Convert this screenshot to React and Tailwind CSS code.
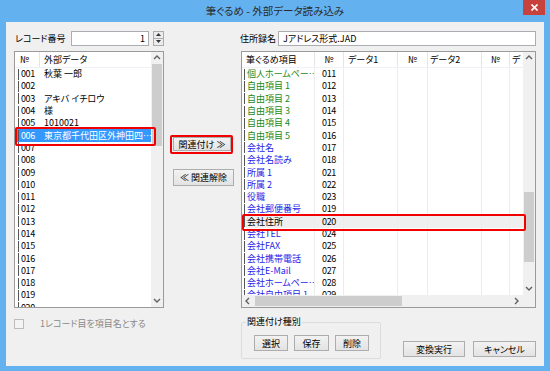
import React from 'react';

const leftRows = [
  ['001', '秋葉 一郎'],
  ['002', ''],
  ['003', 'アキバ イチロウ'],
  ['004', '様'],
  ['005', '1010021'],
  ['006', '東京都千代田区外神田四…', true],
  ['007', ''],
  ['008', ''],
  ['009', ''],
  ['010', ''],
  ['011', ''],
  ['012', ''],
  ['013', ''],
  ['014', ''],
  ['015', ''],
  ['016', ''],
  ['017', ''],
  ['018', ''],
  ['019', ''],
  ['020', ''],
];

const G = 'text-[#1a8a1a]';
const B = 'text-[#1e1ee8]';

const rightRows = [
  ['個人ホームペー…', '011', G],
  ['自由項目 1', '012', G],
  ['自由項目 2', '013', G],
  ['自由項目 3', '014', G],
  ['自由項目 4', '015', G],
  ['自由項目 5', '016', G],
  ['会社名', '017', B],
  ['会社名読み', '018', B],
  ['所属 1', '021', B],
  ['所属 2', '022', B],
  ['役職', '023', B],
  ['会社郵便番号', '019', B],
  ['会社住所', '020', 'text-black', true],
  ['会社TEL', '024', B],
  ['会社FAX', '025', B],
  ['会社携帯電話', '026', B],
  ['会社E-Mail', '027', B],
  ['会社ホームペー…', '028', B],
  ['会社自由項目 1', '029', B],
];

const Chevron = ({ dir }) => {
  const d = {
    up: 'M1 5 L4 2 L7 5',
    down: 'M1 2 L4 5 L7 2',
    left: 'M5 1 L2 4 L5 7',
    right: 'M2 1 L5 4 L2 7',
  }[dir];
  return (
    <svg width="8" height="8" viewBox="0 0 8 8">
      <path d={d} fill="none" stroke="#606060" strokeWidth="1.4" />
    </svg>
  );
};

const Btn = ({ children, className = '' }) => (
  <div
    className={`flex items-center justify-center border border-[#adadad] bg-gradient-to-b from-[#f2f2f2] to-[#e3e3e3] text-black leading-none whitespace-nowrap ${className}`}
  >
    {children}
  </div>
);

export default function App() {
  return (
    <div className="w-[550px] h-[371px] bg-[#64b1f0] flex flex-col font-['Noto_Sans_CJK_JP',sans-serif] [font-feature-settings:'palt'] text-[9px] text-black select-none">
      {/* title bar */}
      <div className="h-[22px] grid grid-cols-[1fr_auto_1fr] items-start">
        <div />
        <div className="pt-[6px] text-[10.5px] leading-none text-[#2a2a2a] whitespace-nowrap">筆ぐるめ - 外部データ読み込み</div>
        <div className="justify-self-end mr-[5px] w-[22px] h-[15px] bg-[#c7413d] flex items-center justify-center">
          <svg width="7" height="7" viewBox="0 0 7 7">
            <path d="M0.5 0.5 L6.5 6.5 M6.5 0.5 L0.5 6.5" stroke="#fff" strokeWidth="1.6" />
          </svg>
        </div>
      </div>

      {/* client area */}
      <div className="mx-[6px] mb-[5px] flex-1 bg-[#f0f0f0] px-[8px] flex flex-col">
        {/* top row */}
        <div className="mt-[9px] h-[14px] flex items-center whitespace-nowrap">
          <div className="w-[57px] leading-none pl-[1px]">レコード番号</div>
          <div className="w-[78px] h-[15px] border border-[#abadb3] bg-white flex items-center justify-end pr-[3px] leading-none">1</div>
          <div className="ml-[4px] w-[11px] h-[15px] border border-[#adadad] flex flex-col bg-[#ececec]">
            <div className="flex-1 flex items-center justify-center border-b border-[#adadad]">
              <svg width="5" height="3" viewBox="0 0 5 3"><path d="M0 3 L2.5 0 L5 3Z" fill="#333" /></svg>
            </div>
            <div className="flex-1 flex items-center justify-center">
              <svg width="5" height="3" viewBox="0 0 5 3"><path d="M0 0 L2.5 3 L5 0Z" fill="#333" /></svg>
            </div>
          </div>
          <div className="ml-[76px] w-[38px] leading-none">住所録名</div>
          <div className="flex-1 h-[15px] border border-[#abadb3] bg-white flex items-center pl-[4px] leading-none">Jアドレス形式.JAD</div>
        </div>

        {/* main row */}
        <div className="mt-[6px] h-[257px] flex">
          {/* left list */}
          <div className="relative w-[150px] border border-[#9a9a9a] bg-white flex">
            <div className="flex-1 flex flex-col overflow-hidden">
              <div className="h-[16px] flex items-center border-b border-[#eef2f7] shrink-0">
                <div className="w-[25px] h-full flex items-center pl-[5px] border-r border-[#e5e5e5]">№</div>
                <div className="pl-[4px]">外部データ</div>
              </div>
              {leftRows.map(([no, text, sel]) => (
                <div key={no} className={`h-[12.3px] shrink-0 flex items-center leading-[12px] whitespace-nowrap ${sel ? 'bg-[#3399ff] text-white' : ''}`}>
                  <div className="ml-[3px] w-px h-[11px] bg-[#555] shrink-0" />
                  <div className="w-[25px] shrink-0 pl-[2px] tracking-[-0.4px]">{no}</div>
                  <div>{text}</div>
                </div>
              ))}
            </div>
            <div className="w-[12px] bg-[#f0f0f0] flex flex-col items-center">
              <div className="h-[12px] flex items-center justify-center"><Chevron dir="up" /></div>
              <div className="w-[10px] h-[82px] bg-[#cdcdcd]" />
              <div className="flex-1" />
              <div className="h-[12px] flex items-center justify-center"><Chevron dir="down" /></div>
            </div>
            <div className="absolute left-0 top-[75px] w-[141px] h-[19px] border-[2.5px] border-[#f20000] rounded-[2px]" />
          </div>

          {/* middle buttons */}
          <div className="w-[77px] flex flex-col items-start pl-[8px]">
            <div className="relative mt-[86px]">
              <Btn className="w-[58px] h-[14px] mx-[1px]">関連付け ≫</Btn>
              <div className="absolute -left-[2px] -top-[2.5px] w-[63px] h-[19px] border-[2.5px] border-[#f20000] rounded-[2px]" />
            </div>
            <Btn className="mt-[18px] ml-[1px] w-[61px] h-[17px]">≪ 関連解除</Btn>
          </div>

          {/* right list */}
          <div className="relative flex-1 border border-[#9a9a9a] bg-white flex flex-col">
            <div className="flex-1 flex min-h-0">
              <div className="flex-1 flex flex-col overflow-hidden">
                <div className="h-[16px] flex shrink-0 border-b border-[#eef2f7] whitespace-nowrap">
                  <div className="w-[73px] shrink-0 flex items-center pl-[4px] border-r border-[#e5e5e5]">筆ぐるめ項目</div>
                  <div className="w-[29px] shrink-0 flex items-center justify-center border-r border-[#e5e5e5]">№</div>
                  <div className="w-[54px] shrink-0 flex items-center pl-[4px] border-r border-[#e5e5e5]">データ1</div>
                  <div className="w-[30px] shrink-0 flex items-center justify-center border-r border-[#e5e5e5]">№</div>
                  <div className="w-[54px] shrink-0 flex items-center pl-[2px] border-r border-[#e5e5e5]">データ2</div>
                  <div className="w-[28px] shrink-0 flex items-center justify-center border-r border-[#e5e5e5]">№</div>
                  <div className="w-[13px] shrink-0 flex items-center pl-[2px] overflow-hidden">デ</div>
                </div>
                {rightRows.map(([name, no, color, sel]) => (
                  <div key={no} className={`h-[12.3px] shrink-0 flex leading-[12px] whitespace-nowrap ${sel ? 'bg-[#efefef]' : ''}`}>
                    <div className={`w-[73px] shrink-0 overflow-hidden flex items-center border-r border-[#ececec] ${color}`}>
                      <div className="ml-[2px] mr-[2px] w-px h-[11px] bg-[#555] shrink-0" />
                      {name}
                    </div>
                    <div className="w-[29px] shrink-0 flex items-center justify-center border-r border-[#ececec] tracking-[-0.4px]">{no}</div>
                    <div className="w-[54px] shrink-0 border-r border-[#ececec]" />
                    <div className="w-[30px] shrink-0 border-r border-[#ececec]" />
                    <div className="w-[54px] shrink-0 border-r border-[#ececec]" />
                    <div className="w-[28px] shrink-0 border-r border-[#ececec]" />
                    <div className="w-[13px] shrink-0" />
                  </div>
                ))}
              </div>
              <div className="w-[12px] bg-[#f0f0f0] flex flex-col items-center">
                <div className="h-[12px] flex items-center justify-center"><Chevron dir="up" /></div>
                <div className="mt-[128px] w-[10px] h-[70px] bg-[#cdcdcd]" />
                <div className="flex-1" />
                <div className="h-[12px] flex items-center justify-center"><Chevron dir="down" /></div>
              </div>
            </div>
            <div className="h-[12px] flex bg-[#f0f0f0] shrink-0">
              <div className="w-[12px] flex items-center justify-center"><Chevron dir="left" /></div>
              <div className="ml-[1px] w-[147px] h-[10px] self-center bg-[#cdcdcd]" />
              <div className="flex-1" />
              <div className="w-[12px] flex items-center justify-center"><Chevron dir="right" /></div>
              <div className="w-[12px] bg-[#f0f0f0]" />
            </div>
            <div className="absolute left-0 top-[162px] w-[284px] h-[17px] border-[2.5px] border-[#f20000] rounded-[2px]" />
          </div>
        </div>

        {/* bottom */}
        <div className="flex-1 flex">
          <div className="w-[227px] pt-[11px] flex items-start">
            <div className="w-[10px] h-[10px] border border-[#bcbcbc] bg-[#f4f4f4]" />
            <div className="ml-[16px] leading-[10px] text-[#8a8a8a] whitespace-nowrap">1レコード目を項目名とする</div>
          </div>
          <div className="relative mt-[14px] mb-[7px] w-[140px] border border-[#dcdcdc] rounded-[2px] flex items-start pt-[12px] pl-[12px] gap-[6px]">
            <div className="absolute left-[4px] -top-[6px] px-[1px] bg-[#f0f0f0] leading-none whitespace-nowrap">関連付け種別</div>
            <Btn className="w-[34px] h-[16px]">選択</Btn>
            <Btn className="w-[35px] h-[16px]">保存</Btn>
            <Btn className="w-[34px] h-[16px]">削除</Btn>
          </div>
          <div className="flex-1 flex items-start justify-end gap-[8px] pt-[33px]">
            <Btn className="w-[62px] h-[16px] border-[#3c7fb1]">変換実行</Btn>
            <Btn className="w-[63px] h-[16px]">キャンセル</Btn>
          </div>
        </div>
      </div>
    </div>
  );
}
